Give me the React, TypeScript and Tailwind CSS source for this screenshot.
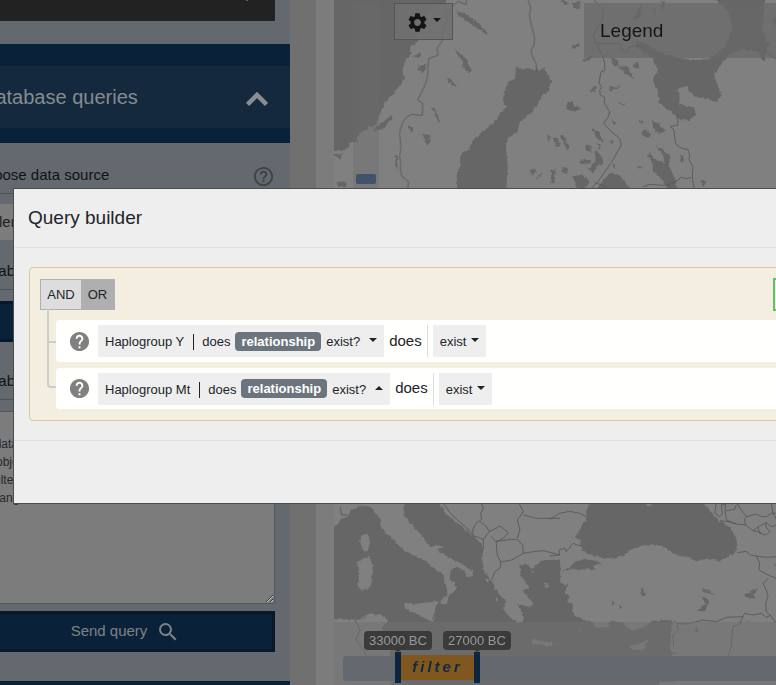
import React from "react";
import { MdHelp, MdHelpOutline, MdKeyboardArrowDown, MdSearch, MdSettings } from "react-icons/md";

const SEA = "#666666";
const LINE = "#565656";

function BaseMap() {
  return (
    <svg
      aria-hidden="true"
      className="absolute inset-0 h-full w-full"
      viewBox="334 0 442 685"
      preserveAspectRatio="xMinYMin slice"
    >
      <defs>
        <filter id="coast" x="0" y="0" width="100%" height="100%" colorInterpolationFilters="sRGB">
          <feTurbulence type="fractalNoise" baseFrequency="0.28" numOctaves="2" seed="4" />
          <feDisplacementMap in="SourceGraphic" scale="4" xChannelSelector="R" yChannelSelector="G" />
        </filter>
      </defs>
      <rect x="300" y="-20" width="520" height="730" fill="#808080" />
      <g filter="url(#coast)" fill={SEA} stroke="none">
        {/* Norwegian coast, Scandinavian lakes and the Gulf of Bothnia */}
        <g transform="translate(330 0) scale(0.33333)">
          <path d="M-20 -30H360L345 10L300 30L290 60L270 90L262 125L240 145L246 162L224 182L218 215L222 238L206 262L180 290L160 315L148 345L140 372L110 386L85 400L80 425L55 432L42 452L-20 454Z" />
          <path d="M556 198L575 208L592 204L620 212L640 205L655 225L663 245L656 275L640 282L632 300L610 330L595 345L570 365L560 400L535 412L528 440L533 500L528 580H382L380 530L392 495L390 465L415 450L430 420L460 392L490 370L505 345L530 320L519 300L522 275L535 245L558 235Z" />
          <path d="M378 30L405 42L440 65L472 98L470 104L440 84L400 55L380 42ZM374 148L395 165L412 180L415 198L430 212L418 218L398 200L398 182L380 160ZM348 232L365 242L382 260L376 264L355 246ZM300 320L315 325L330 365L324 368L312 334ZM235 372L252 390L246 396L234 382ZM274 402L300 404L302 418L292 440L286 420ZM140 380L185 345L188 355L160 385L130 395ZM265 195L290 195L280 216L266 212ZM245 165L275 160L265 178ZM165 275L195 278L180 290ZM195 465L205 470L202 505L196 498ZM12 462L40 460L28 480ZM20 545L50 545L48 562L22 560ZM602 510L616 502L618 515L606 530ZM618 535L640 515L630 532ZM650 400L660 410L655 430ZM30 425L60 435L45 450L24 445ZM60 395L80 385L70 405Z" />
        </g>
        {/* White Sea and Karelian lakes */}
        <g transform="translate(553 0) scale(0.33333)">
          <path d="M470 -30H640L632 30L628 90L646 135L634 185L608 150L570 150L530 160L500 200L485 225L490 245L507 285L490 306L460 296L425 290L398 258L376 270L382 312L420 322L428 345L408 364L380 358L345 330L318 308L314 270L300 240L315 210L298 175L270 155L245 135L262 124L310 150L360 170L420 180L470 178L515 140L538 90L526 35L500 12Z" />
          <path d="M172 170L195 180L200 200L180 198ZM200 200L225 200L245 238L215 222ZM242 192L256 186L258 205L245 206ZM165 258L208 260L195 266L170 272ZM110 272L130 255L128 278ZM40 308L58 304L65 320L82 320L76 330L55 335L40 322ZM196 310L222 312L212 318ZM296 360L318 372L338 392L315 402L302 385ZM262 398L280 388L295 408L275 412ZM256 358L272 364L268 374ZM176 360L190 366L184 376ZM118 384L140 400L152 428L136 420L122 398ZM0 415L10 412L22 435L8 440ZM22 405L30 405L50 440L42 452ZM306 434L330 448L352 470L350 500L370 545V580H350L330 540L300 515L298 490L285 465L290 458L308 480L335 490L330 465ZM96 438L112 435L118 458L100 452ZM130 424L145 436L138 450ZM80 480L110 480L118 490L82 492ZM125 450L148 470L150 490L130 500L120 520L108 505L128 480ZM60 530L85 522L110 545L95 566H75ZM160 530L180 515L210 535L240 580H120L140 555ZM382 465L394 468L390 490L380 482ZM448 540L458 540L454 560L444 556ZM28 500L46 506L40 522L28 515ZM56 10L85 5L78 28L60 22ZM56 135L80 130L78 142L60 148ZM88 180L120 166L106 184ZM14 0L45 4L40 14ZM168 425L182 420L178 434ZM255 32L266 10L262 50L240 62ZM298 25L308 30L304 52ZM326 5L334 0L330 38ZM655 60L672 50V80ZM250 498L268 500L262 508ZM178 488L188 496L184 508ZM-6 510L8 508L4 550L-6 550Z" />
        </g>
        {/* Tyrrhenian, Adriatic, Ionian and Aegean seas */}
        <g transform="translate(330 500) scale(0.33333)">
          <path d="M-20 100L12 82L25 65L55 48L60 30L85 20L115 18L130 28L148 55L155 85L185 115L220 150L260 170L290 185L310 205L340 222L350 265L352 285L335 300L333 312L350 312L358 285L378 270L376 250L360 238L362 212L380 200L400 210L410 228L425 230L428 215L395 192L345 165L322 148L342 140L320 135L300 142L275 105L245 75L222 45L218 -20H310L350 45L390 75L430 108L452 130L462 150L456 180L462 215L485 240L495 265L525 300L520 330L540 352L565 368L582 365L578 335L560 312L600 320L615 310L595 295L578 270L600 265L572 225L568 198L590 190L605 208L620 195L640 180L690 180V560H-20Z" />
        </g>
        {/* Black Sea, Marmara and the eastern Mediterranean */}
        <g transform="translate(553 500) scale(0.33333)">
          <path d="M120 -20H420L460 20L495 60L530 80L550 115L553 145L540 165L500 183L460 176L430 184L400 172L365 165L340 145L320 134L280 134L240 145L210 165L190 175L150 174L110 165L88 150L78 120L66 110L80 90L90 70L102 60L100 35Z" />
          <path d="M50 200L65 185L95 176L125 182L148 192L120 196L125 208L60 208L28 214ZM-10 182L22 190L22 250L45 255L35 280L52 290L40 305L58 310L62 345L95 360L120 368L130 385L165 382L175 362L210 370L235 392L270 382L300 362L335 360L360 362L355 380L352 450L362 470V560H-10ZM260 262L268 262L278 285L270 292ZM176 298L184 305L184 318L178 316ZM196 312L208 322L202 328ZM446 264L460 270L488 284L466 280L450 276ZM432 288L462 294L468 308L452 334L432 332L446 320L458 308L450 298ZM572 284L590 278L598 268L616 266L605 282L606 296L578 292ZM430 382L438 398L428 396ZM575 358L594 368L582 366ZM660 195L680 190V205Z" />
        </g>
      </g>
      {/* Islands and the North African coast */}
      <g filter="url(#coast)" fill="#808080">
        <g transform="translate(330 500) scale(0.33333)">
          <path d="M95 108L112 98L120 125L112 158L98 148L90 125ZM80 188L100 175L118 168L130 200L124 250L118 265L92 270L84 250L88 220ZM222 308L255 312L322 304L312 340L308 366L285 355L255 340L225 325ZM-20 358L60 358L90 360L120 340L160 348L175 362L155 385L160 410L180 430V560H-20ZM600 418L640 424L669 428L665 440L610 432ZM497 290L505 300L498 305ZM465 235L480 240L470 245ZM600 210L615 215L608 220ZM640 250L656 255L650 265Z" />
        </g>
        <g transform="translate(553 500) scale(0.33333)">
          <path d="M230 438L260 430L292 418L280 432L270 448L240 450ZM75 392L88 382L80 396ZM0 430L22 432L10 438ZM268 10L300 8L290 20ZM320 560L318 540L330 545L700 545V560Z" />
        </g>
      </g>
      {/* Country borders */}
      <g fill="none" stroke={LINE} strokeWidth="2.500" strokeLinejoin="round">
        <g transform="translate(330 0) scale(0.33333)">
          <path d="M410 -10L408 14L385 4L370 16L352 40L350 62L336 90L338 120L330 132L321 145L325 165L296 176L294 200L293 230L285 255L263 300L278 310L277 346L245 343L232 350L220 362L212 385L208 400L213 440L208 470L213 490L210 500L215 528L236 545L230 580M592 -10L602 25L598 45L603 70L608 90L614 115L612 135L603 150L607 170L618 190L620 215" />
        </g>
        <g transform="translate(553 0) scale(0.33333)">
          <path d="M115 -10L150 30L148 60L135 80L120 110L135 140L148 165L155 190L155 212L144 215L138 250L146 262L140 270L142 285L155 292L154 310L170 335L166 350L152 370L175 395L200 415L205 435L180 480L135 545L105 575M130 130L200 130L208 150L220 158L228 142L245 138L262 138M374 345L375 375L352 380L362 388L365 410L368 432L385 445L404 448L410 465L408 480L420 500L418 525L420 550L428 575M125 548L160 560M270 560L290 553L330 556L345 555L372 542L385 532L402 536L415 532M628 130L640 155L650 165L672 178" />
        </g>
        <g transform="translate(330 500) scale(0.33333)">
          <path d="M30 20L35 45L52 45M75 360L90 390L78 420L98 445L120 490M340 10L362 40L382 60L412 85L428 105M455 10L460 25L452 40L455 58L438 70L428 90L430 108L445 112L460 118L478 95L468 78L450 65M560 -10L568 12L580 35L562 60L570 90L562 115M580 45L620 55L690 55M478 95L510 78L535 98L520 115L498 125L482 108M498 125L540 118L562 118L578 135L580 160L545 180L512 186L502 165L498 125M485 240L495 215L512 202L512 186M580 160L610 155L640 152L690 165M460 118L460 145" />
        </g>
        <g transform="translate(553 500) scale(0.33333)">
          <path d="M-10 58L20 40L50 34L80 40L102 50M-10 168L20 165L18 150L35 145L40 155L60 130L82 138M490 10L485 40L500 50L508 42L505 15L518 12L516 30L520 60L550 72L578 75L574 60L580 50L565 30L552 10M520 32L545 28L550 15M578 75L600 92L620 78L640 68L655 80L670 76M580 50L610 42L625 50L640 50L655 40L672 40M640 68L638 80L650 95L640 105L620 100L615 80M600 92L625 98M500 62L525 65L550 72M553 158L580 154L592 165L610 168L640 172L672 170M610 168L620 190L618 210L645 225L672 236M645 236L630 250L640 270L645 290L638 310L640 335L655 350L672 372M364 362L372 370L400 372L420 368L450 360L490 365L520 352L570 350L575 340L600 345L625 340L640 352L655 345M372 370L376 390L360 405L362 440M570 350L560 372L540 380L537 410L535 440L525 470M352 455L372 462M655 10L660 40L672 60" />
        </g>
      </g>
    </svg>
  );
}

function Caret({ up = false }: { up?: boolean }) {
  return (
    <svg aria-hidden="true" viewBox="0 0 8 4" className="h-1 w-2 shrink-0 fill-current">
      <path d={up ? "M0 4L4 0L8 4Z" : "M0 0H8L4 4Z"} />
    </svg>
  );
}

function SidebarLabel({ htmlFor, children }: { htmlFor: string; children: React.ReactNode }) {
  return (
    <label
      htmlFor={htmlFor}
      className="flex h-9 items-center border-b border-[#4e5257] pl-[2px] text-[15px] text-[#101315]"
    >
      {children}
    </label>
  );
}

function Sidebar() {
  return (
    <aside className="-ml-[42px] w-[332px] shrink-0 bg-[#646970]">
      <div className="-mt-5 px-[15px]">
        <button
          type="button"
          aria-label="Expand section"
          className="flex h-[41px] w-full items-center justify-end bg-[#222222] pr-4 pb-2 text-[#999999]"
        >
          <MdKeyboardArrowDown size={24} />
        </button>
      </div>

      <h2 className="mt-[23px] bg-[#0a2239] pt-[22px] pb-[15px]">
        <button
          type="button"
          aria-expanded="true"
          className="flex h-[62px] w-full items-center justify-between bg-[#14293e] pr-[22px] pl-[23px] text-xl text-[#868b90]"
        >
          Database queries
          <svg
            aria-hidden="true"
            viewBox="0 0 22 16"
            className="mt-1 h-4 w-[22px] fill-none stroke-[#8a8d90]"
            strokeWidth="4.500"
          >
            <path d="M1.500 13.500L11 4L20.500 13.500" />
          </svg>
        </button>
      </h2>

      <div className="px-[15px]">
        <div className="relative pt-[15px]">
          <SidebarLabel htmlFor="source">Choose data source</SidebarLabel>
          <MdHelpOutline size={23} className="absolute right-0 bottom-[6px] text-[#3f4347]" />
        </div>
        <select
          id="source"
          className="mt-[10px] h-9 w-full appearance-none bg-[#7c7c7c] pl-4 text-[15px] text-[#1d1f21]"
        >
          <option>Elements</option>
        </select>

        <div className="mt-[14px]">
          <SidebarLabel htmlFor="builder">Database query builder</SidebarLabel>
        </div>
        <button
          id="builder"
          type="button"
          className="mt-[11px] block h-[41px] w-full border-[3px] border-[#061829] bg-[#0a2239] text-[15px] text-[#868b90]"
        >
          Query builder
        </button>

        <div className="mt-[22px]">
          <SidebarLabel htmlFor="query">Database query</SidebarLabel>
        </div>
        <textarea
          id="query"
          readOnly
          defaultValue={"All data\nAn object\nAll filters\nBy range"}
          className="mt-[11px] block h-[193px] w-full resize-y border border-[#54585c] bg-[#7c7c7c] px-1 pt-[23px] text-xs leading-[18px] text-[#25282b]"
        />
        <button
          type="button"
          className="mt-[7px] flex h-[41px] w-full items-center justify-center gap-[9px] border-[3px] border-[#061829] bg-[#0a2239] pl-[3px] text-[15px] text-[#7e8285]"
        >
          Send query
          <MdSearch size={24} />
        </button>
      </div>
      <div className="mt-[29px] h-[99px] bg-[#0a2239]" />
    </aside>
  );
}

function TimeHandle({ children }: { children: string }) {
  return (
    <div className="flex w-[6px] flex-col items-center">
      <span className="rounded bg-[#3b3b3b] px-[5px] text-[13px] leading-[19px] whitespace-nowrap text-[#999999]">
        {children}
      </span>
      <svg aria-hidden="true" viewBox="0 0 6 2" className="h-[2px] w-[6px] fill-[#3b3b3b]">
        <path d="M0 0H6L3 2Z" />
      </svg>
      <div className="h-[31px] w-full bg-[#0b263e]" />
    </div>
  );
}

function MapArea() {
  return (
    <main className="relative flex min-w-0 flex-1 flex-col justify-between overflow-hidden bg-[#808080]">
      <BaseMap />
      <div className="relative flex items-start pt-[3px]">
        <div className="ml-[19px] flex h-[190px] w-[26px] flex-col justify-end bg-[#6c6c6c]/40 px-[3px] pb-[9px]">
          <div className="h-[10px] rounded-xs bg-[#40536a]" />
        </div>
        <button
          type="button"
          aria-label="Map settings"
          className="ml-[15px] flex h-[37px] w-[59px] items-start justify-center gap-1 border border-[#555555] bg-[#707070]/90 pt-[7px] text-[#141414]"
        >
          <MdSettings size={23} />
          <span className="pt-[7px]">
            <Caret />
          </span>
        </button>
        <h2 className="ml-[131px] flex h-[55px] flex-1 items-center bg-[#686868]/70 pt-[2px] pl-4 text-[19px] text-[#141719]">
          Legend
        </h2>
      </div>

      <div className="relative h-[63px] bg-[#707070]/50 pl-[9px]">
        <div className="relative mt-[34px] h-[25px] rounded-l bg-[#646970]">
          <div className="absolute -top-[25px] left-[52px] flex items-end">
            <TimeHandle>33000 BC</TimeHandle>
            <div className="mb-[3px] flex h-[25px] w-[73px] items-center justify-center bg-[#80571f] text-[15px] font-bold tracking-[3px] text-[#13293d] italic">
              filter
            </div>
            <TimeHandle>27000 BC</TimeHandle>
          </div>
        </div>
      </div>
    </main>
  );
}

function Rule({ name, open = false, first = false }: { name: string; open?: boolean; first?: boolean }) {
  return (
    <li
      className={
        "relative flex items-center rounded bg-[#fffffd] pl-3 before:absolute before:-left-[9px] before:w-[9px] before:border-b-2 before:border-l-2 before:border-[#cccccc] " +
        (first
          ? "h-[42px] before:-top-[11px] before:h-[34px]"
          : "h-[41px] before:-top-[26px] before:h-[46px] before:rounded-bl")
      }
    >
      <MdHelp size={23} className="shrink-0 text-[#808080]" />
      <button
        type="button"
        aria-expanded={open}
        className="ml-[7px] flex h-8 shrink-0 items-center bg-[#eeeeee] px-[7px] pt-[2px] text-[13px] text-[#212529]"
      >
        {name}
        <span className="mr-2 ml-[9px] h-4 w-px bg-[#212529]" />
        does
        <span className="mx-[5px] mb-[2px] rounded bg-[#6c757d] px-[6px] text-[13px] leading-[19px] font-bold text-white">
          relationship
        </span>
        exist?
        <span className="mb-1 ml-[9px]">
          <Caret up={open} />
        </span>
      </button>
      <span className="ml-[5px] text-[15px] text-[#212529]">does</span>
      <span className="mx-[5px] h-8 w-px bg-[#dddddd]" />
      <button
        type="button"
        className="flex h-8 shrink-0 items-center gap-[5px] bg-[#eeeeee] px-[7px] pt-[2px] text-[13px] text-[#212529]"
      >
        exist
        <span className="mb-1">
          <Caret />
        </span>
      </button>
    </li>
  );
}

function QueryBuilderDialog() {
  return (
    <section
      role="dialog"
      aria-labelledby="dialog-title"
      className="absolute top-[188px] -right-[300px] left-[13px] border border-[#4b4c4e] bg-[#eeeeee]"
    >
      <header className="flex h-[59px] items-center border-b border-[#dee2e6] px-[14px]">
        <h1 id="dialog-title" className="text-[19px] text-[#212529]">
          Query builder
        </h1>
      </header>
      <div className="px-[15px] py-[19px]">
        <div className="rounded border border-[#dcc896] bg-[#f4eee1] px-[10px] pt-[10px] pb-[11px]">
          <div className="flex items-center">
            <div className="flex h-[31px] border border-[#afafaf] text-[13px] text-[#212529]">
              <button type="button" className="w-10 bg-[#dddddd]">
                AND
              </button>
              <button type="button" className="w-[33px] bg-[#afafaf]">
                OR
              </button>
            </div>
            <button
              type="button"
              aria-label="Add rule"
              className="ml-[658px] h-[33px] w-20 border-2 border-[#5cc45c] bg-[#eeeeee]"
            />
          </div>
          <ul className="mt-[9px] flex flex-col gap-[6px] pl-4">
            <Rule name="Haplogroup Y" first />
            <Rule name="Haplogroup Mt" open />
          </ul>
        </div>
      </div>
      <footer className="h-[63px] border-t border-[#dee2e6]" />
    </section>
  );
}

export default function App() {
  return (
    <div className="relative flex h-screen overflow-hidden bg-[#7c7c7c] font-['Liberation_Sans',Arial,sans-serif]">
      <Sidebar />
      <div className="w-[26px] shrink-0 bg-[#707070]" />
      <div className="w-[18px] shrink-0 bg-[#7c7c7c]" />
      <MapArea />
      <QueryBuilderDialog />
    </div>
  );
}
